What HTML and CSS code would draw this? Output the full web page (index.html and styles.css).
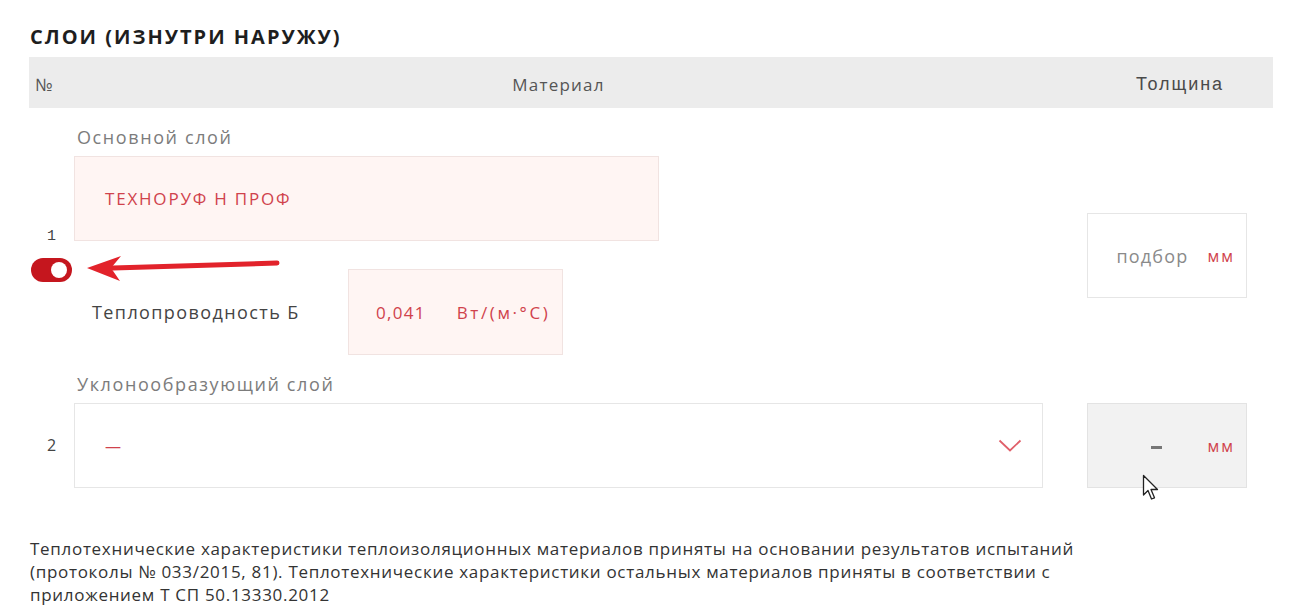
FILE: index.html
```html
<!DOCTYPE html>
<html lang="ru">
<head>
  <meta charset="UTF-8">
  <title>Слои (изнутри наружу)</title>
  <link rel="stylesheet" href="styles.css">
</head>
<body>
<div class="page">

  <h2 class="title">СЛОИ (ИЗНУТРИ НАРУЖУ)</h2>

  <div class="head">
    <div class="head-num">№</div>
    <div class="head-mat">Материал</div>
    <div></div>
    <div class="head-thick">Толщина</div>
  </div>

  <!-- слой 1 -->
  <div class="layer">
    <div class="num-cell num-main">
      <span class="num num-one">1</span>
      <span class="toggle"><span class="knob"></span></span>
    </div>
    <div class="mat-cell">
      <div class="layer-label">Основной слой</div>
      <div class="field pink">ТЕХНОРУФ Н ПРОФ</div>
      <div class="conduct">
        <span class="conduct-label">Теплопроводность Б</span>
        <div class="field pink conduct-box">
          <span>0,041</span>
          <span class="conduct-unit">Вт/(м·°С)</span>
        </div>
      </div>
    </div>
    <div></div>
    <div class="thick-cell thick-main">
      <div class="thick-box">
        <span class="thick-val">подбор</span>
        <span class="unit">мм</span>
      </div>
    </div>
  </div>

  <!-- слой 2 -->
  <div class="layer">
    <div class="num-cell num-second">
      <span class="num">2</span>
    </div>
    <div class="mat-cell">
      <div class="layer-label">Уклонообразующий слой</div>
      <div class="field select">
        <span class="dash">—</span>
        <svg class="chevron" width="24" height="13" viewBox="0 0 24 13">
          <polyline points="1.5,1.5 12,11.5 22.5,1.5" fill="none" stroke="#e0606a" stroke-width="1.8"/>
        </svg>
      </div>
    </div>
    <div></div>
    <div class="thick-cell thick-second">
      <div class="thick-box grey">
        <span class="thick-dash"></span>
        <span class="unit">мм</span>
      </div>
    </div>
  </div>

  <p class="note">Теплотехнические характеристики теплоизоляционных материалов приняты на основании результатов испытаний
(протоколы № 033/2015, 81). Теплотехнические характеристики остальных материалов приняты в соответствии с
приложением Т СП 50.13330.2012</p>

  <!-- стрелка-пометка -->
  <svg class="arrow" width="200" height="32" viewBox="0 0 200 32">
    <line x1="192" y1="9" x2="28" y2="14" stroke="#e2232b" stroke-width="5" stroke-linecap="round"/>
    <polygon points="2,14 36,2 26,14 35,27" fill="#e2232b"/>
  </svg>

  <!-- курсор -->
  <svg class="cursor" width="20" height="28" viewBox="0 0 20 28">
    <path d="M1.5 1.5 L1.5 21 L6 16.5 L9.5 25 L12.5 23.8 L9 15.5 L15.5 15.5 Z" fill="#fff" stroke="#222" stroke-width="1.3" stroke-linejoin="round"/>
  </svg>

</div>
</body>
</html>
```

FILE: styles.css
```css
body {
  margin: 0;
  background: #ffffff;
  font-family: "Open Sans", "Noto Sans", sans-serif;
  color: #333;
}

.page {
  position: relative;
  padding: 25px 0 0 29px;
  width: 1244px;
}

.title {
  margin: 0 0 8px 1px;
  font-size: 20px;
  line-height: 24px;
  font-weight: 700;
  color: #1e1e1e;
  letter-spacing: 2px;
}

/* шапка таблицы */
.head {
  display: grid;
  grid-template-columns: 45px 969px 44px 1fr;
  align-items: center;
  box-sizing: border-box;
  height: 51px;
  padding-top: 3px;
  background-color: #ececec;
  font-size: 17px;
  color: #555;
  letter-spacing: 1.2px;
}

.head-num {
  padding-left: 6px;
}

.head-mat,
.head-thick {
  text-align: center;
}

.head-thick {
  font-family: "Liberation Sans", Arial, sans-serif;
  font-size: 18px;
  letter-spacing: 1.9px;
  color: #4a4a4a;
}

/* строки слоев */
.layer {
  display: grid;
  grid-template-columns: 45px 969px 44px 160px;
}

.num-cell {
  display: flex;
  flex-direction: column;
  align-items: center;
}

.num-main {
  padding-top: 119px;
}

.num-second {
  padding-top: 48px;
}

.num {
  font-size: 16px;
  line-height: 85px;
  color: #444;
}

.num-one {
  font-family: "Liberation Mono", monospace;
  font-size: 15px;
  line-height: 20px;
}

.toggle {
  position: relative;
  display: block;
  width: 41px;
  height: 24px;
  margin-top: 11px;
  border-radius: 12px;
  background-color: #c5161e;
}

.knob {
  position: absolute;
  right: 5px;
  top: 4px;
  width: 16px;
  height: 16px;
  border-radius: 50%;
  background: #fff;
}

.mat-cell {
  display: flex;
  flex-direction: column;
}

.layer-label {
  margin: 19px 0 9px 3px;
  font-size: 18px;
  line-height: 20px;
  color: #7c7c7c;
  letter-spacing: 1.6px;
}

.field {
  box-sizing: border-box;
  height: 85px;
  display: flex;
  align-items: center;
  font-size: 17px;
  color: #d0424c;
  letter-spacing: 1.8px;
}

.pink {
  width: 585px;
  padding-left: 30px;
  background-color: #fff5f3;
  border: 1px solid #f1e3e1;
}

.conduct {
  display: flex;
  align-items: center;
  margin-top: 28px;
  height: 86px;
}

.conduct-label {
  width: 256px;
  padding-left: 18px;
  font-size: 18px;
  color: #444;
  letter-spacing: 1.4px;
}

.conduct-box {
  width: 215px;
  height: 86px;
  padding-left: 27px;
  gap: 31px;
  letter-spacing: 1.3px;
}

.conduct-unit {
  letter-spacing: 2.6px;
}

.select {
  justify-content: space-between;
  padding: 0 20px 0 30px;
  background: #fff;
  border: 1px solid #e6e6e6;
}

.dash {
  font-size: 16px;
  letter-spacing: 0;
}

.thick-main {
  padding-top: 105px;
}

.thick-second {
  padding-top: 48px;
}

.thick-box {
  box-sizing: border-box;
  height: 85px;
  display: flex;
  align-items: center;
  justify-content: flex-end;
  gap: 19px;
  padding-right: 11px;
  border: 1px solid #e6e6e6;
  background: #fff;
}

.thick-box.grey {
  background-color: #f2f2f2;
  border-color: #e3e3e3;
  gap: 46px;
}

.thick-val {
  color: #8a8a8a;
  font-size: 18px;
  letter-spacing: 1.2px;
}

.thick-dash {
  display: block;
  width: 11px;
  height: 3px;
  margin-top: 3px;
  background-color: #777;
}

.unit {
  color: #d0424c;
  font-size: 16px;
  letter-spacing: 2px;
}

.note {
  margin: 49px 0 0 1px;
  font-size: 17px;
  line-height: 23px;
  color: #333;
  white-space: pre-line;
  letter-spacing: 0.7px;
}

.arrow {
  position: absolute;
  left: 85px;
  top: 254px;
}

.cursor {
  position: absolute;
  left: 1142px;
  top: 474px;
}
```
